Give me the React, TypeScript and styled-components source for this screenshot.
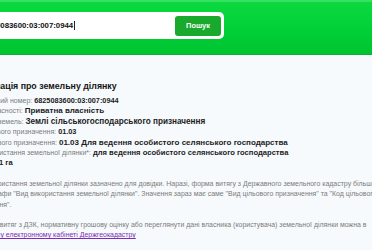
import React from 'react';
import styled, { createGlobalStyle } from 'styled-components';

const GlobalStyle = createGlobalStyle`
  html, body {
    margin: 0;
    padding: 0;
    background: #f7fafd;
  }
  body {
    font-family: "Liberation Sans", Arial, sans-serif;
    overflow: hidden;
  }
`;

const Header = styled.header`
  box-sizing: border-box;
  height: 55px;
  padding-top: 10px;
  background: linear-gradient(180deg, #0bd93f 0%, #00cf36 60%, #00c330 100%);
  border-top: 2px solid #35e062;
  border-bottom: 1px solid #13ab33;
`;

const SearchForm = styled.form`
  box-sizing: border-box;
  display: flex;
  align-items: center;
  justify-content: space-between;
  margin-left: -40px;
  width: 264px;
  height: 27px;
  padding: 0 3px 0 23px;
  background: #fff;
  border-radius: 5px;
`;

const SearchInput = styled.span`
  font-size: 7.8px;
  font-weight: 600;
  color: #111;
  border-right: 1px solid #222;
  padding-right: 1px;
  line-height: 9px;
`;

const SearchButton = styled.button`
  width: 46px;
  height: 20px;
  border: 0;
  border-radius: 3px;
  background: #18a92d;
  color: #fff;
  font-family: "Liberation Sans", Arial, sans-serif;
  font-size: 7.4px;
  font-weight: 700;
  padding: 0;
`;

const Main = styled.main`
  margin-left: -34px;
  width: 440px;
  padding-top: 26px;
`;

const Title = styled.h2`
  margin: 0 0 4px;
  padding-left: 2px;
  font-size: 8.8px;
  font-weight: 700;
  color: #141414;
  line-height: 11px;
`;

const InfoList = styled.div`
  display: flex;
  flex-direction: column;
`;

const InfoRow = styled.div`
  font-size: 7px;
  line-height: 10.4px;
  white-space: nowrap;
  color: #7a7a7a;
`;

const Value = styled.b<{ $size: number }>`
  font-size: ${(p) => p.$size}px;
  color: #1c1c1c;
  font-weight: 700;
`;

const Note = styled.p<{ $gap: number }>`
  margin: ${(p) => p.$gap}px 0 0;
  width: 440px;
  font-size: 6.95px;
  line-height: 10.4px;
  color: #7a7a7a;
`;

const CabinetLink = styled.a`
  color: #7b2bb5;
  text-decoration: underline;
`;

const rows: [string, string, number][] = [
  ['Кадастровий номер: ', '6825083600:03:007:0944', 7.3],
  ['Форма власності: ', 'Приватна власність', 8],
  ['Категорія земель: ', 'Землі сільськогосподарського призначення', 8.2],
  ['Код цільового призначення: ', '01.03', 7.3],
  ['Вид цільового призначення: ', '01.03 Для ведення особистого селянського господарства', 8],
  ['Вид використання земельної ділянки*: ', 'для ведення особистого селянського господарства', 7.6],
  ['Площа: ', '2.1 га', 7.6],
];

export default function App() {
  return (
    <>
      <GlobalStyle />
      <Header>
        <SearchForm onSubmit={(e) => e.preventDefault()}>
          <SearchInput>6825083600:03:007:0944</SearchInput>
          <SearchButton type="submit">Пошук</SearchButton>
        </SearchForm>
      </Header>
      <Main>
        <Title>Інформація про земельну ділянку</Title>
        <InfoList>
          {rows.map(([label, value, size]) => (
            <InfoRow key={label}>
              {label}
              <Value $size={size}>{value}</Value>
            </InfoRow>
          ))}
        </InfoList>
        <Note $gap={10}>
          *Вид використання земельної ділянки зазначено для довідки. Наразі, форма витягу з Державного
          земельного кадастру більше не містить графи "Вид використання земельної ділянки". Значення
          зараз має саме "Вид цільового призначення" та "Код цільового призначення".
        </Note>
        <Note $gap={10}>
          Отримати витяг з ДЗК, нормативну грошову оцінку або переглянути дані власника (користувача)
          земельної ділянки можна в{' '}
          <CabinetLink href="#">особистому електронному кабінеті Держгеокадастру</CabinetLink>
        </Note>
      </Main>
    </>
  );
}
